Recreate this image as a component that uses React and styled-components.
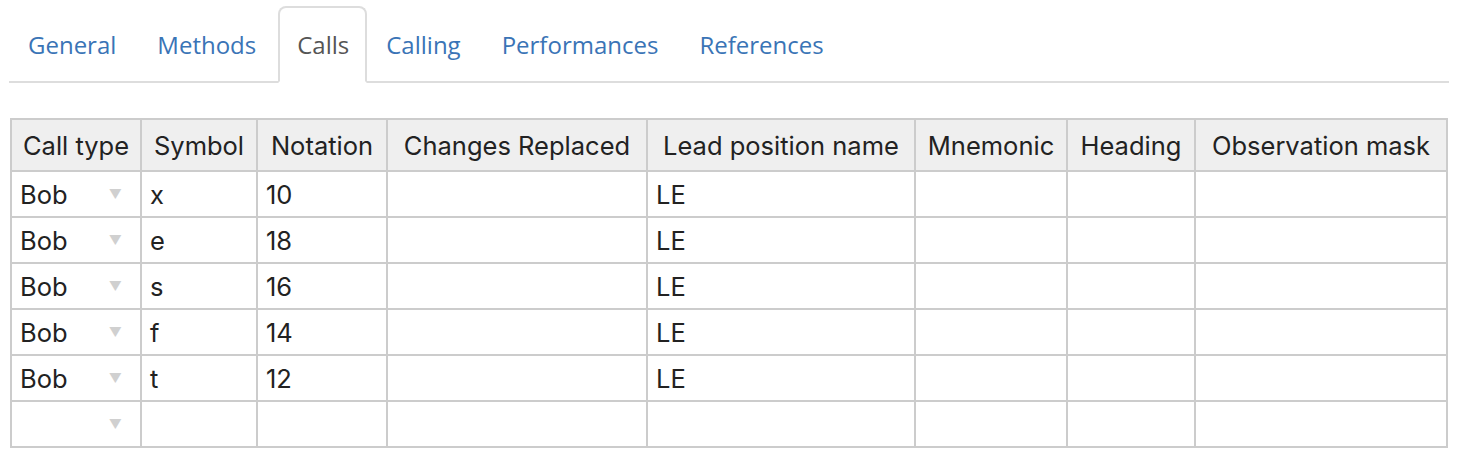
import React from 'react';
import styled, { createGlobalStyle } from 'styled-components';

const GlobalStyle = createGlobalStyle`
  *, *::before, *::after { box-sizing: border-box; }
  body {
    margin: 0;
    background: #fff;
    font-family: "Open Sans", "Liberation Sans", sans-serif;
  }
`;

const tabs = ['General', 'Methods', 'Calls', 'Calling', 'Performances', 'References'];

const columns = [
  { label: 'Call type', width: 130 },
  { label: 'Symbol', width: 116 },
  { label: 'Notation', width: 130 },
  { label: 'Changes Replaced', width: 260 },
  { label: 'Lead position name', width: 268 },
  { label: 'Mnemonic', width: 152 },
  { label: 'Heading', width: 128 },
  { label: 'Observation mask', width: 252 },
];

const rows = [
  { type: 'Bob', symbol: 'x', notation: '10', lead: 'LE' },
  { type: 'Bob', symbol: 'e', notation: '18', lead: 'LE' },
  { type: 'Bob', symbol: 's', notation: '16', lead: 'LE' },
  { type: 'Bob', symbol: 'f', notation: '14', lead: 'LE' },
  { type: 'Bob', symbol: 't', notation: '12', lead: 'LE' },
  { type: '', symbol: '', notation: '', lead: '' },
];

const App = () => (
  <Page>
    <GlobalStyle />
    <TabBar>
      {tabs.map(t => (
        <Tab key={t} active={t === 'Calls'}>{t}</Tab>
      ))}
    </TabBar>
    <Table>
      <colgroup>
        {columns.map(c => <col key={c.label} style={{ width: c.width }} />)}
      </colgroup>
      <thead>
        <tr>
          {columns.map(c => <HeadCell key={c.label}>{c.label}</HeadCell>)}
        </tr>
      </thead>
      <tbody>
        {rows.map((r, i) => (
          <tr key={i}>
            <Cell>
              <SelectBox>
                <span>{r.type}</span>
                <Caret>▼</Caret>
              </SelectBox>
            </Cell>
            <Cell>{r.symbol}</Cell>
            <Cell>{r.notation}</Cell>
            <Cell />
            <Cell>{r.lead}</Cell>
            <Cell />
            <Cell />
            <Cell />
          </tr>
        ))}
      </tbody>
    </Table>
  </Page>
);

export default App;

const Page = styled.div`
  padding: 6px 15px 0 9px;
  width: 1464px;
`;

const TabBar = styled.div`
  display: flex;
  width: 1440px;
  height: 77px;
  border-bottom: 2px solid #dddddd;
`;

const Tab = styled.div`
  height: 77px;
  margin-bottom: -2px;
  padding: 0 ${p => (p.active ? '16px' : '20px')} 0 17px;
  display: flex;
  align-items: center;
  font-size: 24px;
  color: ${p => (p.active ? '#555555' : '#3a74b6')};
  background: ${p => (p.active ? '#ffffff' : 'transparent')};
  border: 2px solid ${p => (p.active ? '#dddddd' : 'transparent')};
  border-bottom-color: ${p => (p.active ? '#ffffff' : 'transparent')};
  border-radius: 8px 8px 0 0;
`;

const Table = styled.table`
  margin-top: 35px;
  margin-left: 1px;
  width: 1438px;
  table-layout: fixed;
  border-collapse: separate;
  border-spacing: 0;
  border-top: 2px solid #cccccc;
  border-left: 2px solid #cccccc;
  font-family: Inter, "Liberation Sans", sans-serif;
  font-size: 25.5px;
  color: #222222;
`;

const HeadCell = styled.th`
  height: 52px;
  padding: 0 2px;
  background: #efefef;
  font-weight: 400;
  text-align: center;
  white-space: nowrap;
  border-right: 2px solid #cccccc;
  border-bottom: 2px solid #cccccc;
`;

const Cell = styled.td`
  height: 46px;
  padding: 0 8px;
  text-align: left;
  white-space: nowrap;
  border-right: 2px solid #cccccc;
  border-bottom: 2px solid #cccccc;
`;

const SelectBox = styled.div`
  display: flex;
  align-items: center;
  justify-content: space-between;
  padding-right: 10px;
`;

const Caret = styled.span`
  font-size: 13px;
  color: #d0d0d0;
`;
